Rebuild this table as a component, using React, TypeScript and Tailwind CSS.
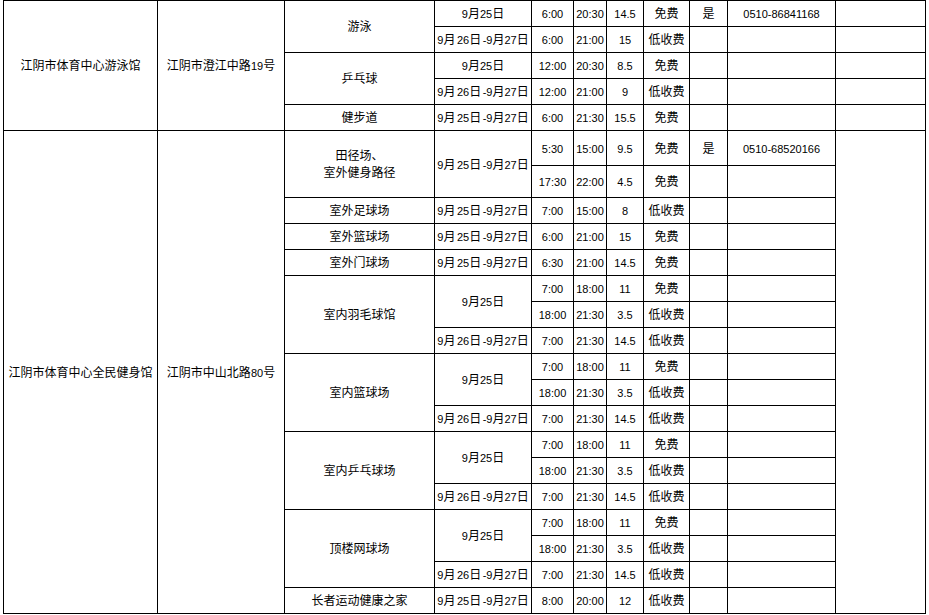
import React from "react";

type Cell = { t: string; rs?: number };
type Row = { h: string; cells: Cell[] };

const D2 = "9月 26日 -9月27日";
const D3 = "9月 25日 -9月27日";
const D1 = "9月25日";

function Txt({ s }: { s: string }) {
  const lines = s.split("\n");
  return (
    <>
      {lines.map((line, li) => {
        const parts = line.split(/([\u3000-\u9fff\uff00-\uffef]+| )/);
        return (
          <div key={li} className="whitespace-nowrap">
            {parts.map((p, i) =>
              p === "" ? null : p === " " ? (
                <span key={i} className="inline-block w-[1.5px]" />
              ) : /[\u3000-\u9fff\uff00-\uffef]/.test(p) ? (
                <span key={i} className="text-[12px]">
                  {p}
                </span>
              ) : (
                <span key={i} className="text-[11px]">
                  {p}
                </span>
              )
            )}
          </div>
        );
      })}
    </>
  );
}

const c = (t: string, rs?: number): Cell => ({ t, rs });

const indoor = (name: string): Row[] => [
  {
    h: "h-[26px]",
    cells: [c(name, 3), c(D1, 2), c("7:00"), c("18:00"), c("11"), c("免费"), c(""), c("")],
  },
  { h: "h-[26px]", cells: [c("18:00"), c("21:30"), c("3.5"), c("低收费"), c(""), c("")] },
  {
    h: "h-[26px]",
    cells: [c(D2), c("7:00"), c("21:30"), c("14.5"), c("低收费"), c(""), c("")],
  },
];

const rows: Row[] = [
  {
    h: "h-[26px]",
    cells: [
      c("江阴市体育中心游泳馆", 5),
      c("江阴市澄江中路19号", 5),
      c("游泳", 2),
      c(D1),
      c("6:00"),
      c("20:30"),
      c("14.5"),
      c("免费"),
      c("是"),
      c("0510-86841168"),
      c(""),
    ],
  },
  {
    h: "h-[26px]",
    cells: [c(D2), c("6:00"), c("21:00"), c("15"), c("低收费"), c(""), c(""), c("")],
  },
  {
    h: "h-[26px]",
    cells: [c("乒乓球", 2), c(D1), c("12:00"), c("20:30"), c("8.5"), c("免费"), c(""), c(""), c("")],
  },
  {
    h: "h-[26px]",
    cells: [c(D2), c("12:00"), c("21:00"), c("9"), c("低收费"), c(""), c(""), c("")],
  },
  {
    h: "h-[26px]",
    cells: [c("健步道"), c(D3), c("6:00"), c("21:30"), c("15.5"), c("免费"), c(""), c(""), c("")],
  },
  {
    h: "h-[35px]",
    cells: [
      c("江阴市体育中心全民健身馆", 18),
      c("江阴市中山北路80号", 18),
      c("田径场、\n室外健身路径", 2),
      c(D3, 2),
      c("5:30"),
      c("15:00"),
      c("9.5"),
      c("免费"),
      c("是"),
      c("0510-68520166"),
      c("", 18),
    ],
  },
  { h: "h-[32px]", cells: [c("17:30"), c("22:00"), c("4.5"), c("免费"), c(""), c("")] },
  {
    h: "h-[26px]",
    cells: [c("室外足球场"), c(D3), c("7:00"), c("15:00"), c("8"), c("低收费"), c(""), c("")],
  },
  {
    h: "h-[26px]",
    cells: [c("室外篮球场"), c(D3), c("6:00"), c("21:00"), c("15"), c("免费"), c(""), c("")],
  },
  {
    h: "h-[26px]",
    cells: [c("室外门球场"), c(D3), c("6:30"), c("21:00"), c("14.5"), c("免费"), c(""), c("")],
  },
  ...indoor("室内羽毛球馆"),
  ...indoor("室内篮球场"),
  ...indoor("室内乒乓球场"),
  ...indoor("顶楼网球场"),
  {
    h: "h-[26px]",
    cells: [c("长者运动健康之家"), c(D3), c("8:00"), c("20:00"), c("12"), c("低收费"), c(""), c("")],
  },
];

export default function App() {
  return (
    <div className="w-[929px] h-[615px] overflow-hidden bg-white font-['Liberation_Sans','Noto_Sans_CJK_SC',sans-serif] text-black">
      <table className="ml-[3px] w-[923px] table-fixed border-collapse">
        <colgroup>
          <col className="w-[154px]" />
          <col className="w-[127px]" />
          <col className="w-[150px]" />
          <col className="w-[97px]" />
          <col className="w-[42px]" />
          <col className="w-[33px]" />
          <col className="w-[37px]" />
          <col className="w-[46px]" />
          <col className="w-[38px]" />
          <col className="w-[108px]" />
          <col className="w-[90px]" />
        </colgroup>
        <tbody>
          {rows.map((r, ri) => (
            <tr key={ri} className={r.h}>
              {r.cells.map((cell, ci) => (
                <td
                  key={ci}
                  rowSpan={cell.rs}
                  className="border border-black p-0 text-center align-middle leading-[16px]"
                >
                  <Txt s={cell.t} />
                </td>
              ))}
            </tr>
          ))}
        </tbody>
      </table>
    </div>
  );
}
